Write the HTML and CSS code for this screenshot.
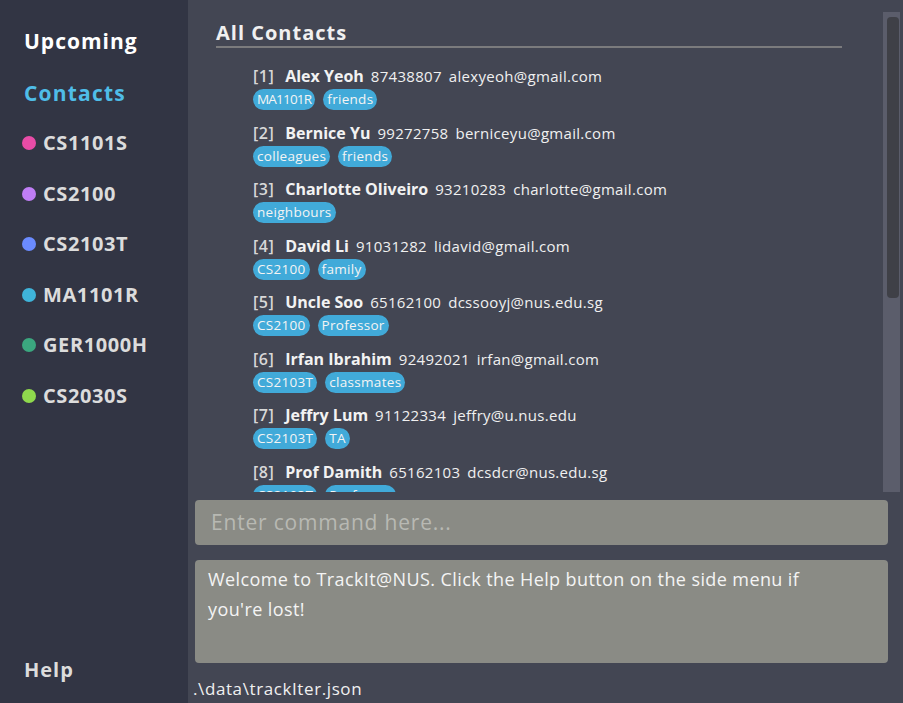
FILE: index.html
```html
<!DOCTYPE html>
<html>
<head>
<meta charset="utf-8">
<link rel="stylesheet" href="styles.css">
</head>
<body>
<div class="app">
  <aside class="sidebar">
    <div class="nav-item nav-upcoming">Upcoming</div>
    <div class="nav-item nav-contacts">Contacts</div>
    <div class="module"><span class="dot dot-pink"></span>CS1101S</div>
    <div class="module"><span class="dot dot-purple"></span>CS2100</div>
    <div class="module"><span class="dot dot-blue"></span>CS2103T</div>
    <div class="module"><span class="dot dot-cyan"></span>MA1101R</div>
    <div class="module"><span class="dot dot-green"></span>GER1000H</div>
    <div class="module"><span class="dot dot-lime"></span>CS2030S</div>
    <div class="spacer"></div>
    <div class="nav-item nav-help">Help</div>
  </aside>
  <main class="main">
    <section class="list-panel">
      <div class="list-content">
        <h1 class="title">All Contacts</h1>
        <div class="contact">
          <div class="line"><span class="idx">[1]</span><span class="name">Alex Yeoh</span><span class="info">87438807</span><span class="info">alexyeoh@gmail.com</span></div>
          <div class="tags"><span class="tag tag-tight">MA1101R</span><span class="tag">friends</span></div>
        </div>
        <div class="contact">
          <div class="line"><span class="idx">[2]</span><span class="name">Bernice Yu</span><span class="info">99272758</span><span class="info">berniceyu@gmail.com</span></div>
          <div class="tags"><span class="tag">colleagues</span><span class="tag">friends</span></div>
        </div>
        <div class="contact">
          <div class="line"><span class="idx">[3]</span><span class="name">Charlotte Oliveiro</span><span class="info">93210283</span><span class="info">charlotte@gmail.com</span></div>
          <div class="tags"><span class="tag">neighbours</span></div>
        </div>
        <div class="contact">
          <div class="line"><span class="idx">[4]</span><span class="name">David Li</span><span class="info">91031282</span><span class="info">lidavid@gmail.com</span></div>
          <div class="tags"><span class="tag">CS2100</span><span class="tag">family</span></div>
        </div>
        <div class="contact">
          <div class="line"><span class="idx">[5]</span><span class="name">Uncle Soo</span><span class="info">65162100</span><span class="info">dcssooyj@nus.edu.sg</span></div>
          <div class="tags"><span class="tag">CS2100</span><span class="tag">Professor</span></div>
        </div>
        <div class="contact">
          <div class="line"><span class="idx">[6]</span><span class="name">Irfan Ibrahim</span><span class="info">92492021</span><span class="info">irfan@gmail.com</span></div>
          <div class="tags"><span class="tag">CS2103T</span><span class="tag">classmates</span></div>
        </div>
        <div class="contact">
          <div class="line"><span class="idx">[7]</span><span class="name">Jeffry Lum</span><span class="info">91122334</span><span class="info">jeffry@u.nus.edu</span></div>
          <div class="tags"><span class="tag">CS2103T</span><span class="tag">TA</span></div>
        </div>
        <div class="contact">
          <div class="line"><span class="idx">[8]</span><span class="name">Prof Damith</span><span class="info">65162103</span><span class="info">dcsdcr@nus.edu.sg</span></div>
          <div class="tags"><span class="tag">CS2103T</span><span class="tag">Professor</span></div>
        </div>
      </div>
      <div class="scrollbar"><div class="thumb"></div></div>
    </section>
    <div class="command">Enter command here...</div>
    <div class="result">Welcome to TrackIt@NUS. Click the Help button on the side menu if you're lost!</div>
    <div class="status">.\data\trackIter.json</div>
  </main>
</div>
</body>
</html>
```
FILE: styles.css
```css
* { box-sizing: border-box; }
html, body { margin: 0; padding: 0; }
body {
  font-family: "Open Sans", "Noto Sans", sans-serif;
  background: #434653;
  color: #ffffff;
}
.app {
  display: flex;
  width: 903px;
  height: 703px;
}
.sidebar {
  width: 188px;
  flex: none;
  background: #323544;
  display: flex;
  flex-direction: column;
  padding: 26px 0 18px 0;
}
.nav-item {
  padding-left: 24px;
  font-weight: 700;
  font-size: 21px;
  line-height: 30px;
  letter-spacing: 1px;
}
.nav-upcoming { color: #ffffff; margin-bottom: 22px; }
.nav-contacts { color: #4fbde8; margin-bottom: 20px; letter-spacing: 1.2px; }
.nav-help { color: #dcdcdc; font-size: 20px; }
.module {
  display: flex;
  align-items: center;
  gap: 7px;
  padding-left: 22px;
  font-weight: 700;
  font-size: 20px;
  line-height: 30px;
  letter-spacing: 0.6px;
  color: #dcdcdc;
  margin-bottom: 20.5px;
}
.dot {
  width: 14px;
  height: 14px;
  border-radius: 50%;
  flex: none;
}
.dot-pink { background: #e84ca7; }
.dot-purple { background: #c07ef6; }
.dot-blue { background: #6b8bff; }
.dot-cyan { background: #3fb4da; }
.dot-green { background: #3ba77f; }
.dot-lime { background: #8fd94d; }
.spacer { flex: 1; }
.main {
  flex: 1;
  display: flex;
  flex-direction: column;
  min-width: 0;
}
.list-panel {
  margin-top: 12px;
  height: 480px;
  display: flex;
  overflow: hidden;
}
.list-content {
  flex: 1;
  padding: 8px 41px 0 28px;
  overflow: hidden;
}
.title {
  margin: 0;
  font-size: 20px;
  font-weight: 700;
  line-height: 26px;
  letter-spacing: 1px;
  color: #f0f0f0;
  border-bottom: 2px solid #7b7b7d;
  margin-bottom: 17px;
}
.contact {
  padding-left: 37px;
  height: 56.5px;
}
.line {
  display: flex;
  align-items: baseline;
  gap: 7px;
  line-height: 23px;
  white-space: nowrap;
}
.idx {
  font-weight: 600;
  font-size: 16px;
  letter-spacing: 0.5px;
  color: #d8d8d8;
  margin-right: 4px;
}
.name {
  font-weight: 700;
  font-size: 16px;
  color: #f2f2f2;
}
.info {
  font-size: 15px;
  letter-spacing: 0.3px;
  color: #f0f0f0;
}
.tags {
  display: flex;
  gap: 8px;
  margin-top: 1px;
}
.tag {
  background: #41aad9;
  color: #f4f4f4;
  font-size: 13.5px;
  letter-spacing: 0.3px;
  line-height: 21px;
  height: 21px;
  padding: 0 4px;
  border-radius: 10.5px;
}
.tag-tight { letter-spacing: -0.8px; }
.scrollbar {
  width: 17px;
  flex: none;
  margin-right: 3px;
  background: #5b5d6b;
  padding: 5px 1px 0 4px;
}
.thumb {
  height: 281px;
  background: #3f4047;
  border-radius: 4px;
}
.command {
  margin: 8px 15px 0 7px;
  height: 45px;
  background: #8a8b85;
  border-radius: 4px;
  color: #b8b9b3;
  font-size: 21px;
  letter-spacing: 0.8px;
  line-height: 45px;
  padding-left: 16px;
}
.result {
  margin: 15px 15px 0 7px;
  height: 103px;
  background: #8a8b85;
  border-radius: 4px;
  color: #f4f4f4;
  font-size: 18px;
  letter-spacing: 0.4px;
  line-height: 30px;
  padding: 4px 60px 0 13px;
}
.status {
  padding-left: 5px;
  margin-top: 14px;
  font-size: 17px;
  letter-spacing: 0.6px;
  line-height: 24px;
  color: #f0f0f0;
}
```
